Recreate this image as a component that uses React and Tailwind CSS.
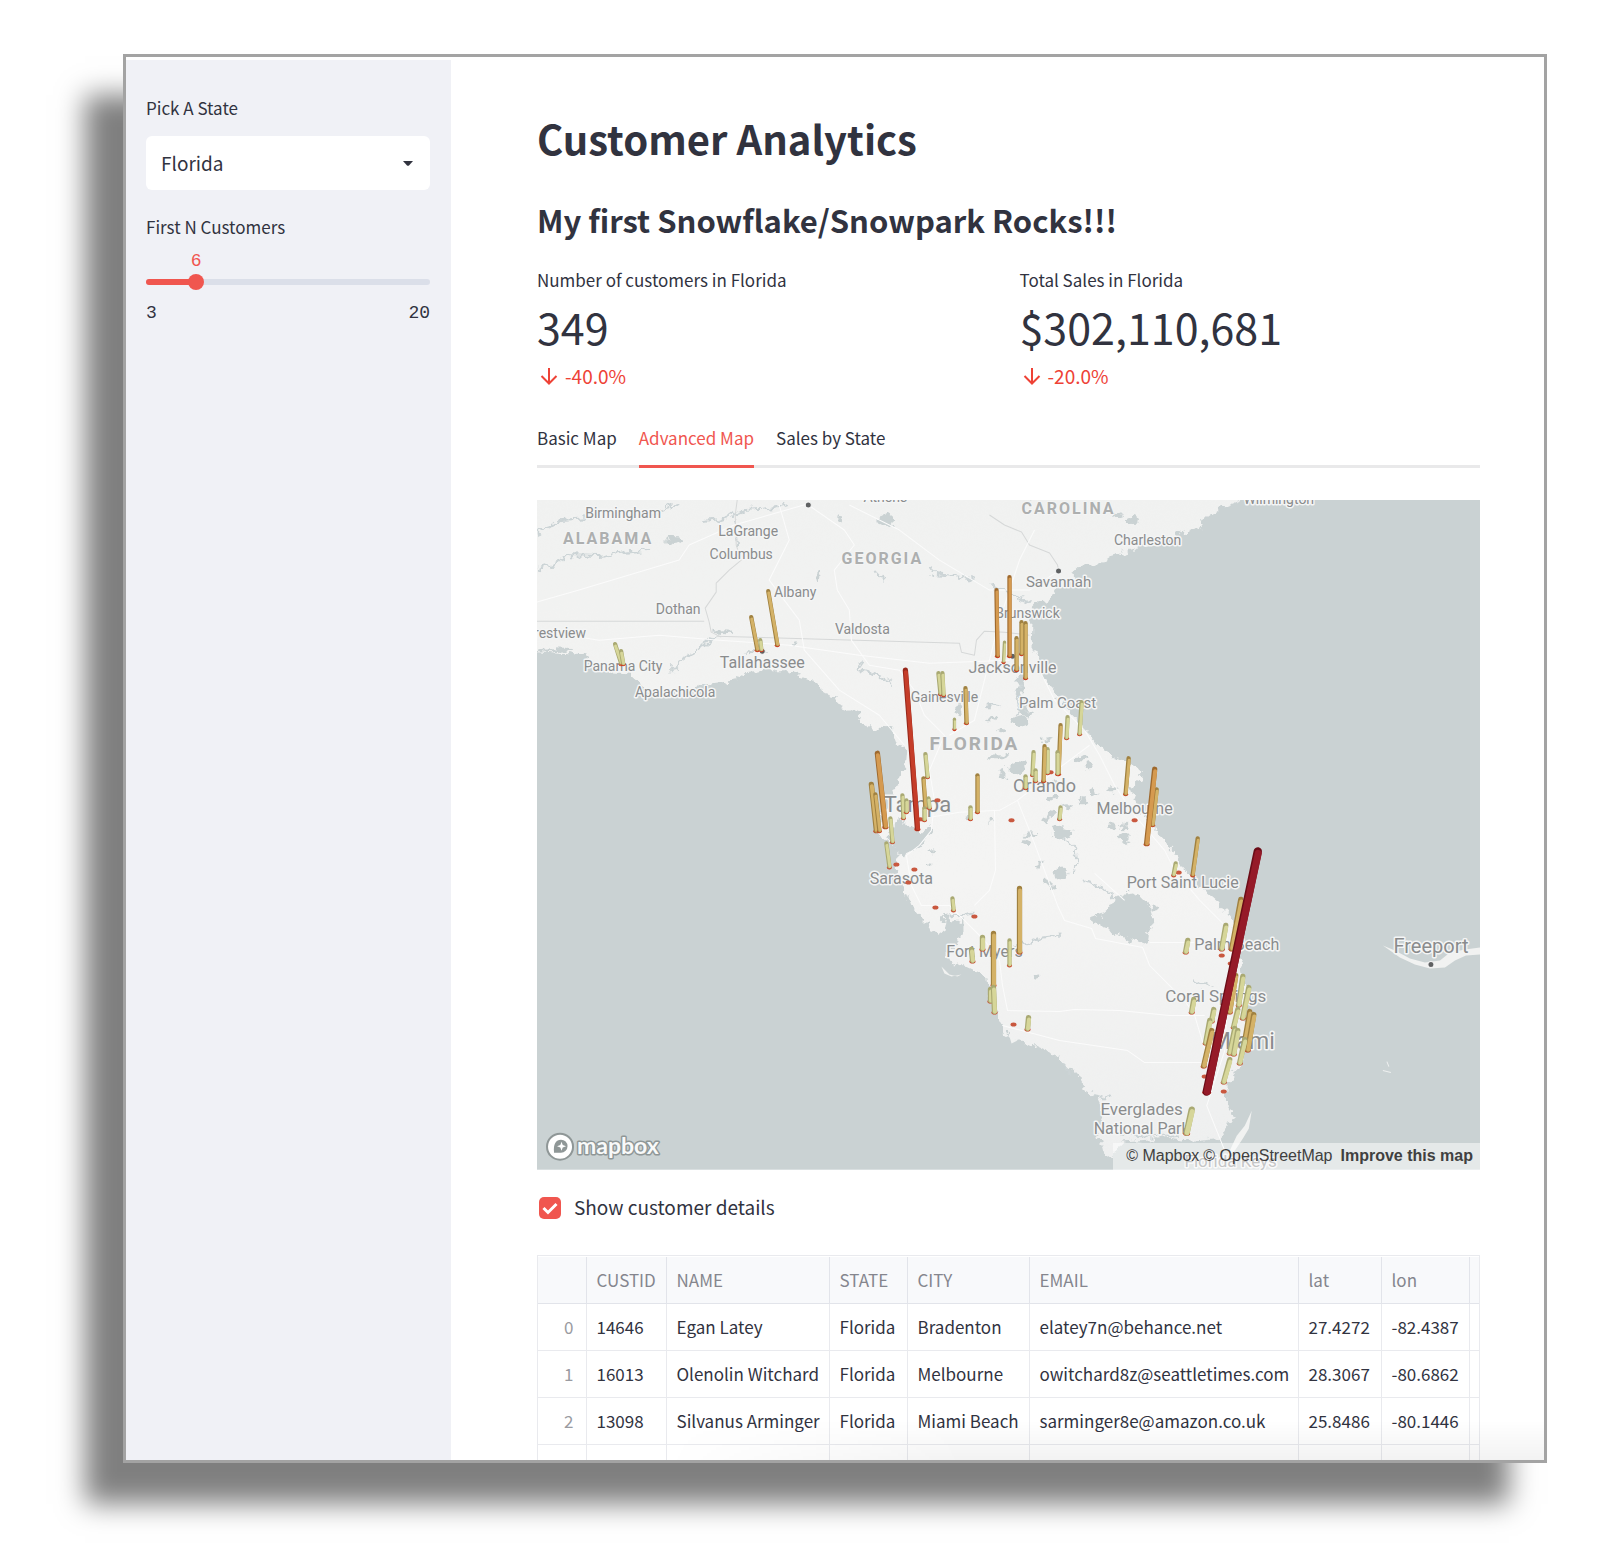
import { useState } from "react";

const LAND =
  "538,460 500,460 500,652 538,652 570,654 588,657 600,667 607,672 630,673 640,682 647,690 657,695 677,692 697,687 713,683 737,680 747,672 763,670 787,670 807,677 818,683 823,692 835,695 837,705 857,713 867,727 892,728 898,745 907,747 906,758 903,773 897,787 890,797 887,805 882,817 877,829 882,836 892,843 897,850 897,860 898,873 907,893 913,908 927,923 932,930 945,933 947,923 940,915 948,914 955,922 962,918 962,932 957,945 948,952 952,966 957,960 967,967 980,973 988,977 990,997 997,1017 1003,1027 1010,1036 1022,1040 1040,1048 1060,1057 1067,1067 1080,1077 1087,1090 1097,1097 1105,1113 1098,1130 1103,1150 1113,1158 1120,1142 1147,1140 1167,1137 1193,1140 1220,1137 1230,1123 1235,1117 1227,1103 1228,1083 1238,1070 1246,1060 1247,1037 1243,1017 1245,990 1242,967 1238,940 1232,920 1220,903 1207,892 1197,883 1183,867 1173,850 1157,832 1147,820 1133,797 1130,788 1142,780 1141,775 1132,763 1113,758 1097,743 1083,725 1070,712 1058,697 1047,682 1040,663 1032,647 1033,623 1030,610 1037,603 1050,600 1057,587 1077,583 1073,572 1080,565 1103,562 1113,555 1137,548 1160,543 1180,533 1200,527 1207,517 1220,508 1240,500 1260,460";

const WATERS = [
  "1123,893 1132,892 1140,895 1150,905 1155,922 1148,933 1147,945 1127,938 1113,933 1108,927 1100,924 1090,917 1103,913 1113,905 1117,895",
  "893,822 897,816 904,820 910,829 918,828 922,833 930,824 935,830 927,841 914,849 903,855 896,850 890,838",
];

// [cx, cy, rx, ry]
const LAKES = [
  [675, 541, 9, 5], [887, 520, 8, 6], [820, 576, 2, 5], [555, 650, 17, 2],
  [725, 632, 10, 2], [1133, 520, 8, 4], [1118, 515, 6, 3], [841, 519, 3, 3],
  [755, 651, 12, 1], [795, 643, 3, 2], [959, 709, 5, 3], [992, 718, 5, 2],
  [1017, 767, 8, 6], [1022, 721, 8, 6], [998, 756, 10, 3], [1003, 730, 4, 2],
  [962, 711, 3, 4], [1082, 758, 6, 3], [1090, 766, 4, 3], [968, 819, 3, 3],
  [992, 820, 3, 3], [1051, 798, 5, 3], [1050, 813, 5, 3], [1062, 832, 10, 6],
  [1047, 818, 3, 3], [1093, 791, 4, 3], [1112, 789, 5, 2], [1125, 838, 5, 6],
  [1124, 827, 4, 3], [1112, 826, 3, 2], [1061, 874, 7, 6], [1048, 882, 4, 3],
  [1053, 886, 2, 3], [1039, 863, 3, 2], [1156, 908, 4, 3], [1038, 976, 3, 2],
  [1031, 835, 6, 3], [1025, 843, 4, 3], [932, 851, 3, 1],
  [930, 863, 3, 1], [1069, 806, 4, 2], [1020, 690, 4, 7], [1022, 679, 5, 4],
  [1028, 712, 7, 3], [989, 706, 3, 2], [1003, 774, 3, 4], [1024, 706, 3, 5],
  [1047, 740, 6, 2], [1055, 783, 3, 4], [1083, 800, 4, 2], [1123, 808, 5, 2],
];

const STREAMS = [
  "M538 533 L552 528 562 520 590 518 M538 569 L555 564 566 556 600 557 630 552 650 549",
  "M650 517 L668 508 680 504 M706 521 L722 519 748 510 770 508 790 504",
  "M735 520 L738 545",
  "M931 565 L934 574 955 576 975 579 M875 569 L880 574 885 580",
  "M859 660 L862 670 880 675 892 683",
  "M672 672 L680 662 700 648 715 636",
  "M990 584 L1003 589 1015 596 1030 602",
  "M1018 670 L1022 684 1015 694 1024 706 1016 716",
  "M1032 500 L1022 494 M985 708 L992 704 1002 706",
  "M1065 838 L1076 848 1078 862 1072 872 M1085 880 L1100 885 1115 898",
  "M1014 945 L1030 942 1045 937 1060 935 M1195 980 L1202 984 1211 984",
  "M950 915 L965 914 975 912",
  "M1060 1060 L1072 1076 M1090 1094 L1108 1098 M1120 1134 L1150 1136 1180 1134",
];

const BORDERS = [
  "M738 500 L736 515 737 545 742 560 730 570 717 583 717 592 706 608 710 622 712 632 722 637",
  "M538 621 H705",
  "M717 636 L960 643 962 652 975 655 977 640 985 631 1005 632 1030 635",
  "M990 515 L1005 525 1022 532 1030 545 1050 553 1058 565 1059 570",
];

const ROADS = [
  "M538 602 L580 590 640 572 680 560 690 545 735 525 808 504",
  "M809 505 L845 530 855 545 835 570 838 590 850 610 852 640 870 665 900 670 915 690 925 715 945 735 930 770 935 800 932 830 920 845 907 855 912 885 922 905 950 905 965 920 985 940 1000 960 1003 985 1008 1010 1060 1011 1075 1009 1120 1010 1170 1015 1205 1015",
  "M538 630 L600 640 660 635 720 640 790 645 860 655 930 663 1010 660",
  "M850 505 L900 530 940 560 990 590 1030 590 1060 570",
  "M780 505 L790 540 770 580 800 620 805 650 840 690 880 715 905 745",
  "M925 818 L960 812 1000 810 1018 800 1050 775 1090 745",
  "M1040 670 L1055 700 1085 730 1100 755 1115 785 1135 815 1165 850 1175 870 1200 900 1225 925 1232 960 1228 1000 1225 1050 1207 1105 1225 1150",
  "M1018 800 L1030 830 1045 870 1058 905 1065 920 1092 928 1096 938 1143 947 1150 965 1185 1000 1195 1015 1210 1065",
  "M995 810 L996 870 990 890 975 905",
  "M1003 1025 L1060 1040 1128 1050 1145 1062 1210 1062",
  "M950 735 L975 720 990 660 1000 620 1020 560 1035 530",
  "M1150 942 H1225 M1095 873 L1125 900",
];

const ISLANDS = [
  "1383,945 1395,950 1410,958 1425,962 1440,960 1450,952 1465,949 1480,947 1480,954 1466,955 1455,960 1445,967 1430,968 1415,964 1400,957",
  "1252,1110 1245,1125 1237,1135 1230,1150 1226,1157 1235,1150 1243,1138 1249,1128",
  "942,966 950,974 958,976 962,974 952,976 945,973",
  "1010,1036 1018,1040 1012,1043",
];

// [x, baseline, size, text]
const PLACES = [
  [886, 502, 14, "Athens"], [1279, 504, 14, "Wilmington"],
  [624, 518, 14, "Birmingham"], [749, 536, 14, "LaGrange"], [742, 559, 14, "Columbus"],
  [796, 597, 14, "Albany"], [679, 614, 14, "Dothan"], [561, 638, 14, "restview"],
  [863, 634, 14, "Valdosta"], [624, 671, 14, "Panama City"], [763, 668, 16, "Tallahassee"],
  [676, 697, 14, "Apalachicola"], [945, 702, 14, "Gainesville"], [918, 812, 22, "Tampa"],
  [1148, 545, 14, "Charleston"], [1059, 587, 15, "Savannah"], [1028, 618, 14, "Brunswick"],
  [1013, 673, 16, "Jacksonville"], [1058, 708, 15, "Palm Coast"], [1045, 792, 18, "Orlando"],
  [1135, 814, 16, "Melbourne"], [902, 884, 16, "Sarasota"], [985, 957, 16, "Fort Myers"],
  [1183, 888, 16, "Port Saint Lucie"], [1237, 950, 16, "Palm Beach"],
  [1216, 1001, 17, "Coral Springs"], [1243, 1048, 23, "Miami"],
  [1142, 1114, 17, "Everglades"], [1142, 1133, 16, "National Park"],
  [1431, 953, 20, "Freeport"], [1231, 1166, 17, "Florida Keys"],
];

const STATES = [
  [609, 544, 16, "ALABAMA"], [883, 564, 16, "GEORGIA"],
  [1069, 514, 16, "CAROLINA"], [975, 750, 19, "FLORIDA"],
];

const TONES = {
  g: ["#a9a972", "#d6d699"],
  y: ["#a08140", "#d4b267"],
  o: ["#9f692d", "#d59a50"],
  r: ["#97281b", "#c53d29"],
  d: ["#6b0c17", "#951a28"],
};

// [top x, top y, base x, base y, tone, width]
const BARS = [
  [997, 590, 998, 655, "o", 4], [1010, 577, 1010, 655, "o", 4], [1005, 642, 1004, 661, "g", 3],
  [1022, 622, 1022, 653, "y", 4], [1017, 638, 1017, 669, "y", 4], [1026, 623, 1026, 677, "y", 4],
  [616, 644, 622, 663, "g", 4], [622, 651, 624, 663, "g", 4],
  [752, 617, 758, 649, "y", 4], [761, 640, 762, 649, "g", 4], [769, 591, 778, 644, "y", 4],
  [939, 673, 941, 693, "g", 4], [943, 673, 944, 694, "g", 4],
  [966, 688, 967, 722, "y", 4], [955, 719, 955, 728, "g", 3],
  [1082, 702, 1080, 733, "g", 4], [1068, 717, 1067, 737, "g", 4],
  [1061, 725, 1059, 773, "y", 4], [1058, 752, 1058, 773, "g", 4],
  [1034, 752, 1033, 774, "g", 4], [1048, 749, 1048, 772, "g", 4], [1045, 746, 1044, 780, "y", 4],
  [1036, 770, 1036, 780, "g", 4], [1026, 776, 1026, 787, "g", 4], [1061, 807, 1060, 818, "g", 4],
  [1129, 758, 1126, 793, "y", 4], [1157, 789, 1153, 824, "y", 4], [1155, 769, 1147, 843, "o", 5],
  [926, 754, 928, 776, "g", 4], [924, 778, 926, 806, "y", 4], [929, 798, 930, 807, "g", 4],
  [925, 808, 925, 819, "g", 4], [903, 795, 904, 817, "g", 4], [907, 800, 907, 811, "g", 4],
  [978, 775, 978, 811, "y", 4], [971, 807, 971, 818, "g", 4],
  [878, 753, 886, 826, "o", 5], [872, 784, 877, 830, "y", 5], [876, 794, 880, 830, "y", 4],
  [906, 670, 918, 828, "r", 5], [891, 818, 893, 841, "g", 4], [887, 843, 890, 866, "g", 4],
  [953, 898, 954, 909, "g", 4], [983, 937, 983, 948, "g", 5], [972, 949, 973, 960, "g", 5],
  [994, 933, 994, 984, "y", 5], [991, 989, 991, 1000, "g", 5], [994, 987, 995, 1011, "g", 5],
  [1010, 940, 1010, 964, "g", 4], [1020, 888, 1020, 951, "y", 5], [1029, 1017, 1028, 1028, "g", 5],
  [1198, 838, 1193, 874, "y", 4], [1176, 863, 1174, 874, "g", 4],
  [1241, 899, 1232, 948, "y", 5], [1226, 925, 1222, 948, "g", 5], [1188, 940, 1186, 951, "g", 5],
  [1194, 999, 1192, 1011, "g", 5], [1236, 975, 1230, 1011, "y", 5], [1243, 976, 1239, 1004, "g", 5],
  [1249, 987, 1243, 1017, "g", 5], [1238, 1009, 1234, 1026, "g", 5], [1214, 1009, 1212, 1020, "g", 5],
  [1210, 1020, 1206, 1042, "g", 5], [1212, 1030, 1204, 1065, "y", 5],
  [1250, 1011, 1244, 1046, "y", 5], [1254, 1014, 1248, 1049, "y", 5],
  [1235, 1028, 1230, 1052, "g", 5], [1238, 1030, 1234, 1053, "g", 5],
  [1245, 1039, 1240, 1062, "g", 5], [1230, 1059, 1224, 1081, "g", 5],
  [1258, 851, 1207, 1091, "d", 8], [1192, 1109, 1187, 1132, "g", 6],
];

const DOTS = [
  [1012, 820], [1135, 820], [1051, 772], [938, 800], [897, 864], [915, 869], [909, 882],
  [936, 907], [975, 916], [1179, 872], [1222, 955], [1014, 1024], [1205, 1076], [1224, 1091],
  [921, 819], [1231, 963],
];

const ROWS = [
  ["0", "14646", "Egan Latey", "Florida", "Bradenton", "elatey7n@behance.net", "27.4272", "-82.4387"],
  ["1", "16013", "Olenolin Witchard", "Florida", "Melbourne", "owitchard8z@seattletimes.com", "28.3067", "-80.6862"],
  ["2", "13098", "Silvanus Arminger", "Florida", "Miami Beach", "sarminger8e@amazon.co.uk", "25.8486", "-80.1446"],
  ["", "", "", "", "", "", "", ""],
];

const HEADERS = ["CUSTID", "NAME", "STATE", "CITY", "EMAIL", "lat", "lon"];

function FloridaMap() {
  return (
    <div className="relative">
      <svg viewBox="538 500 942 669" className="block w-full" role="img" aria-label="Customer map of Florida">
        <defs>
          <filter id="coast" filterUnits="userSpaceOnUse" x="520" y="480" width="980" height="710" colorInterpolationFilters="sRGB">
            <feTurbulence type="fractalNoise" baseFrequency="0.12" numOctaves="3" seed="4" />
            <feDisplacementMap in="SourceGraphic" scale="12" xChannelSelector="R" yChannelSelector="G" />
          </filter>
          <linearGradient id="ground" x1="0" y1="0" x2="0" y2="1">
            <stop offset="0" stopColor="#f0f1f0" />
            <stop offset="0.6" stopColor="#f4f4f3" />
            <stop offset="1" stopColor="#eeefef" />
          </linearGradient>
        </defs>
        <rect x="538" y="500" width="942" height="669" fill="#cad2d3" />
        <g filter="url(#coast)">
          <polygon points={LAND} fill="url(#ground)" />
          {WATERS.map((p) => (
            <polygon key={p} points={p} fill="#cad2d3" />
          ))}
          {LAKES.map(([x, y, rx, ry]) => (
            <ellipse key={`${x}-${y}`} cx={x} cy={y} rx={rx} ry={ry} fill="#cad2d3" />
          ))}
          {STREAMS.map((d) => (
            <path key={d} d={d} fill="none" stroke="#ccd4d6" strokeWidth="2" />
          ))}
        </g>
        {BORDERS.map((d) => (
          <path key={d} d={d} fill="none" stroke="#d6d8d8" strokeWidth="1" strokeLinejoin="round" />
        ))}
        {ROADS.map((d) => (
          <path key={d} d={d} fill="none" stroke="#fbfbfb" strokeWidth="1" strokeLinejoin="round" />
        ))}
        {ISLANDS.map((p) => (
          <polygon key={p} points={p} fill="#f1f2f1" />
        ))}
        <path d="M1383 1070 L1391 1072 M1387 1061 L1389 1066" stroke="#eef0ef" fill="none" />

        <g textAnchor="middle" strokeLinejoin="round" paintOrder="stroke" stroke="#f4f5f5" className="font-['Roboto',sans-serif]">
          {PLACES.map(([x, y, size, name]) => (
            <text key={name} x={x} y={y} fontSize={size} fill="#8a8c8d" strokeWidth="3">{name}</text>
          ))}
          {STATES.map(([x, y, size, name]) => (
            <text key={name} x={x} y={y} fontSize={size} fontWeight="700" letterSpacing="2" fill="#adafaf" strokeWidth="2">{name}</text>
          ))}
        </g>
        {[[809, 505], [1059, 571], [763, 651], [1431, 964], [1013, 656]].map(([x, y]) => (
          <circle key={x} cx={x} cy={y} r="3" fill="#5f6162" stroke="#f4f5f5" strokeWidth="1" />
        ))}

        {DOTS.map(([x, y]) => (
          <ellipse key={`${x}-${y}`} cx={x} cy={y} rx="3" ry="2" fill="#c9583f" />
        ))}
        {BARS.map(([tx, ty, bx, by, tone, w]) => (
          <g key={`${tx}-${ty}`} strokeLinecap="round">
            <ellipse cx={bx} cy={by + 1} rx={w / 2 + 0.5} ry="2" fill="#cf3d22" />
            <line x1={tx} y1={ty} x2={bx} y2={by} stroke={TONES[tone][0]} strokeWidth={w + 0.3} />
            <line x1={tx + 0.5} y1={ty + 2} x2={bx + 0.5} y2={by} stroke={TONES[tone][1]} strokeWidth={w - 1} />
          </g>
        ))}

        <g>
          <circle cx="561" cy="1146" r="13" fill="#ffffff" stroke="#8f9797" strokeWidth="2" />
          <path d="M555 1152 C554 1143 557 1139 562 1139 A6.500 6.500 0 1 1 562 1152 C559 1152 557 1152 555 1152 Z" fill="#8f9797" />
          <path d="M562.500 1141 L563.700 1144.300 567 1145.500 563.700 1146.700 562.500 1150 561.300 1146.700 558 1145.500 561.300 1144.300 Z" fill="#ffffff" />
          <text x="578" y="1153" fontSize="23" fontWeight="700" fill="#f8f9f9" stroke="#8f9797" strokeWidth="3" strokeLinejoin="round" paintOrder="stroke" className="font-['Lato',sans-serif]">mapbox</text>
        </g>
      </svg>
      <div className="absolute right-0 bottom-0 flex h-[27px] items-center gap-2 bg-white/50 pr-[7px] pl-[13px] font-['Liberation_Sans',sans-serif] text-[16px] text-[#404040]">
        <span className="flex gap-1">
          <a href="#mapbox">© Mapbox</a>
          <a href="#osm">© OpenStreetMap</a>
        </span>
        <a href="#improve" className="font-bold">Improve this map</a>
      </div>
    </div>
  );
}

function Metric({ label, value, delta }) {
  return (
    <div>
      <div className="text-[17px] leading-6">{label}</div>
      <div className="mt-1 text-[43px] leading-[60px]">{value}</div>
      <div className="mt-[6px] flex items-center gap-1 text-[19px] leading-7 text-[#ee4236]">
        <svg viewBox="0 0 24 24" className="h-6 w-6" fill="none" stroke="currentColor" strokeWidth="2" aria-hidden="true">
          <path d="M12 4V19M4.500 12 12 19.500 19.500 12" />
        </svg>
        <span>{delta}</span>
      </div>
    </div>
  );
}

export default function App() {
  const [count, setCount] = useState(6);
  const [tab, setTab] = useState("Advanced Map");
  const pct = ((count - 3) / 17) * 100;

  return (
    <div className="min-h-screen bg-white pt-[54px] pr-[69px] pl-[123px] font-['Noto_Sans_CJK_JP','Noto_Sans_CJK_SC',sans-serif] text-[#31333f]">
      <div className="relative flex h-[calc(100vh-153px)] overflow-hidden border-3 border-[#a3a3a3] bg-white pt-[3px] shadow-[-38px_41px_26px_0px_rgba(0,0,0,0.5)]">
        <aside className="w-[325px] shrink-0 bg-[#f0f1f6] pt-9 pr-[21px] pl-5">
          <label htmlFor="state" className="block text-[17px] leading-6">Pick A State</label>
          <div className="relative mt-4">
            <select id="state" defaultValue="Florida" className="h-[54px] w-full appearance-none rounded-md bg-white px-[15px] text-[19px]">
              <option>Florida</option>
              <option>Georgia</option>
              <option>Alabama</option>
            </select>
            <svg viewBox="0 0 10 5" className="pointer-events-none absolute top-[25px] right-[17px] h-[5px] w-[10px]" aria-hidden="true">
              <path d="M0 0H10L6 4.500Q5 5 4 4.500Z" fill="#31333f" />
            </svg>
          </div>
          <label htmlFor="count" className="mt-[25px] block text-[17px] leading-6">First N Customers</label>
          <div className="relative mt-3 h-5 font-['Liberation_Mono',monospace] text-[18px] leading-5 text-[#f0554f]">
            <output htmlFor="count" className="absolute -translate-x-1/2" style={{ left: `${pct}%` }}>{count}</output>
          </div>
          <div className="relative mt-[3px] h-4">
            <div className="absolute inset-x-0 top-[5px] h-[6px] overflow-hidden rounded-full bg-[#dbdfe9]">
              <div className="h-full bg-[#f0564f]" style={{ width: `${pct}%` }} />
            </div>
            <input
              id="count"
              type="range"
              min="3"
              max="20"
              value={count}
              onChange={(e) => setCount(Number(e.target.value))}
              className="absolute top-0 -left-2 h-4 w-[calc(100%+16px)] appearance-none bg-transparent [&::-webkit-slider-thumb]:h-4 [&::-webkit-slider-thumb]:w-4 [&::-webkit-slider-thumb]:appearance-none [&::-webkit-slider-thumb]:rounded-full [&::-webkit-slider-thumb]:bg-[#f0564f]"
            />
          </div>
          <div className="mt-[11px] flex justify-between font-['Liberation_Mono',monospace] text-[18px] leading-6">
            <span>3</span>
            <span>20</span>
          </div>
        </aside>

        <main className="min-w-0 flex-1 pr-16 pl-[86px]">
          <h1 className="mt-[46px] text-[40px] leading-[64px] font-semibold">Customer Analytics</h1>
          <h2 className="mt-[26px] text-[31px] leading-[48px] font-semibold">My first Snowflake/Snowpark Rocks!!!</h2>
          <div className="mt-6 grid grid-cols-2 gap-[22px]">
            <Metric label="Number of customers in Florida" value="349" delta="-40.0%" />
            <Metric label="Total Sales in Florida" value="$302,110,681" delta="-20.0%" />
          </div>

          <div role="tablist" className="mt-8 flex gap-[22px] border-b-3 border-[#e9e9ea]">
            {["Basic Map", "Advanced Map", "Sales by State"].map((name) => (
              <button
                key={name}
                type="button"
                role="tab"
                aria-selected={tab === name}
                onClick={() => setTab(name)}
                className={
                  tab === name
                    ? "-mb-[3px] border-b-3 border-[#f0564f] pt-1 pb-[15px] text-[17px] leading-6 text-[#f0564f]"
                    : "-mb-[3px] border-b-3 border-transparent pt-1 pb-[15px] text-[17px] leading-6"
                }
              >
                {name}
              </button>
            ))}
          </div>

          <div className="mt-8">
            <FloridaMap />
          </div>

          <label className="mt-[21px] flex h-8 items-center gap-[13px] pl-[2px] text-[19px] leading-7">
            <span className="relative mt-[2px] h-[22px] w-[22px]">
              <input type="checkbox" defaultChecked className="peer h-[22px] w-[22px] appearance-none rounded-[5px] border border-gray-300 checked:border-0 checked:bg-[#f0564f]" />
              <svg viewBox="0 0 22 22" className="pointer-events-none absolute inset-0 hidden peer-checked:block" fill="none" stroke="#ffffff" strokeWidth="3" aria-hidden="true">
                <path d="M4.500 11 9 15.500 17.500 7" />
              </svg>
            </span>
            Show customer details
          </label>

          <div className="mt-8 overflow-hidden border border-[#e9eaee] pt-px">
            <table className="w-full table-fixed border-collapse text-[17px] leading-6 whitespace-nowrap">
              <colgroup>
                <col className="w-[48px]" />
                <col className="w-[80px]" />
                <col className="w-[163px]" />
                <col className="w-[78px]" />
                <col className="w-[122px]" />
                <col className="w-[269px]" />
                <col className="w-[83px]" />
                <col className="w-[88px]" />
                <col />
              </colgroup>
              <thead>
                <tr className="h-[47px] bg-[#f8f9fb] text-left text-[#85868e]">
                  <th className="border-r border-b border-[#e2e4ea]" aria-label="Index" />
                  {HEADERS.map((h) => (
                    <th key={h} className="border-r border-b border-[#e2e4ea] pl-[10px] font-normal">{h}</th>
                  ))}
                  <th className="border-b border-[#e2e4ea]" aria-label="More" />
                </tr>
              </thead>
              <tbody>
                {ROWS.map(([id, ...cells]) => (
                  <tr key={id} className="h-[47px]">
                    <td className="border-r border-b border-[#e9eaee] pr-3 text-right text-[#9a9ba1]">{id}</td>
                    {cells.map((c, i) => (
                      <td key={HEADERS[i]} className="border-r border-b border-[#e9eaee] pl-[10px]">{c}</td>
                    ))}
                    <td className="border-b border-[#e9eaee]" />
                  </tr>
                ))}
              </tbody>
            </table>
          </div>
        </main>
        <div className="pointer-events-none absolute right-0 bottom-0 left-[540px] h-10 bg-linear-to-b from-black/0 to-black/5 [mask-image:linear-gradient(to_right,transparent,black_300px)]" />
      </div>
    </div>
  );
}
